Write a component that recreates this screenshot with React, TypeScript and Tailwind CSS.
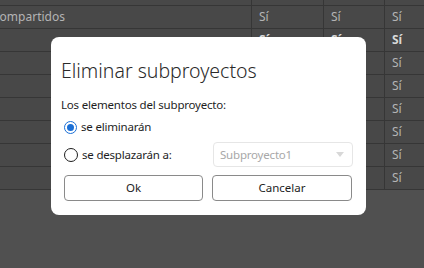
import React from "react";

const font = { fontFamily: '"Noto Sans", "Open Sans", sans-serif' };

function Row({ first, bold, c2, c3, c4 }: { first?: string; bold?: boolean; c2?: string; c3?: string; c4?: string }) {
  const base = "border-b border-[#363636] h-[23px] flex items-center overflow-hidden whitespace-nowrap";
  const b = bold ? " font-bold text-[#d8d8d8]" : "";
  return (
    <div className="grid grid-cols-[252px_72px_61px_1fr] text-[12px] text-[#b4b4b4]">
      <div className={base + " border-r"}>
        <span className="ml-[-8px]">{first}</span>
      </div>
      <div className={base + " border-r pl-[7px]" + b}>{c2}</div>
      <div className={base + " border-r pl-[7px]" + b}>{c3}</div>
      <div className={base + " pl-[7px]" + b}>{c4}</div>
    </div>
  );
}

export default function App() {
  return (
    <div className="relative w-[424px] h-[268px] bg-[#505050] overflow-hidden" style={font}>
      <div className="bg-[#484848]">
        <div className="grid grid-cols-[252px_72px_61px_1fr] h-[6px]">
          <div className="border-r border-b border-[#363636]" />
          <div className="border-r border-b border-[#363636]" />
          <div className="border-r border-b border-[#363636]" />
          <div className="border-b border-[#363636]" />
        </div>
        <Row first="Compartidos" c2="Sí" c3="Sí" c4="Sí" />
        <Row bold c2="Sí" c3="Sí" c4="Sí" />
        <Row c4="Sí" />
        <Row c4="Sí" />
        <Row c4="Sí" />
        <Row c4="Sí" />
        <Row c4="Sí" />
        <Row c4="Sí" />
      </div>

      <div className="absolute left-[51px] top-[37px] w-[315px] h-[178px] bg-white rounded-[8px] px-[13px] text-[#1e1e1e] flex flex-col">
        <div className="mt-[22px] ml-[-3px] text-[19.5px] leading-[24px] text-[#2a2a2a] font-light">Eliminar subproyectos</div>
        <div className="mt-[14px] ml-[-3px] text-[11.5px] leading-[16px] tracking-[-0.2px]">Los elementos del subproyecto:</div>
        <div className="mt-[4px] flex items-center h-[20px]">
          <span className="w-[13px] h-[13px] rounded-full border border-[#1a6fd6] flex items-center justify-center">
            <span className="w-[7px] h-[7px] rounded-full bg-[#1a6fd6]" />
          </span>
          <span className="ml-[4px] text-[11.5px] tracking-[-0.2px]">se eliminarán</span>
        </div>
        <div className="mt-[5px] flex items-center h-[25px]">
          <span className="w-[14px] h-[14px] rounded-full border border-[#1e1e1e]" />
          <span className="ml-[4px] text-[11.5px] tracking-[-0.2px] w-[130px]">se desplazarán a:</span>
          <div className="ml-auto w-[140px] h-[25px] border border-[#e6e6e6] rounded-[4px] flex items-center pl-[6px] pr-[8px] text-[11.5px] tracking-[-0.2px] text-[#a8a8a8]">
            <span className="flex-1">Subproyecto1</span>
            <svg width="8" height="5" viewBox="0 0 8 5"><path d="M0 0 L8 0 L4 5 Z" fill="#d8d8d8" /></svg>
          </div>
        </div>
        <div className="mt-[8px] flex gap-[9px]">
          <button className="w-[139px] h-[26px] border border-[#8a8a8a] rounded-[4px] text-[11.5px] text-[#1e1e1e] bg-white">Ok</button>
          <button className="w-[140px] h-[26px] border border-[#8a8a8a] rounded-[4px] text-[11.5px] text-[#1e1e1e] bg-white">Cancelar</button>
        </div>
      </div>
    </div>
  );
}
